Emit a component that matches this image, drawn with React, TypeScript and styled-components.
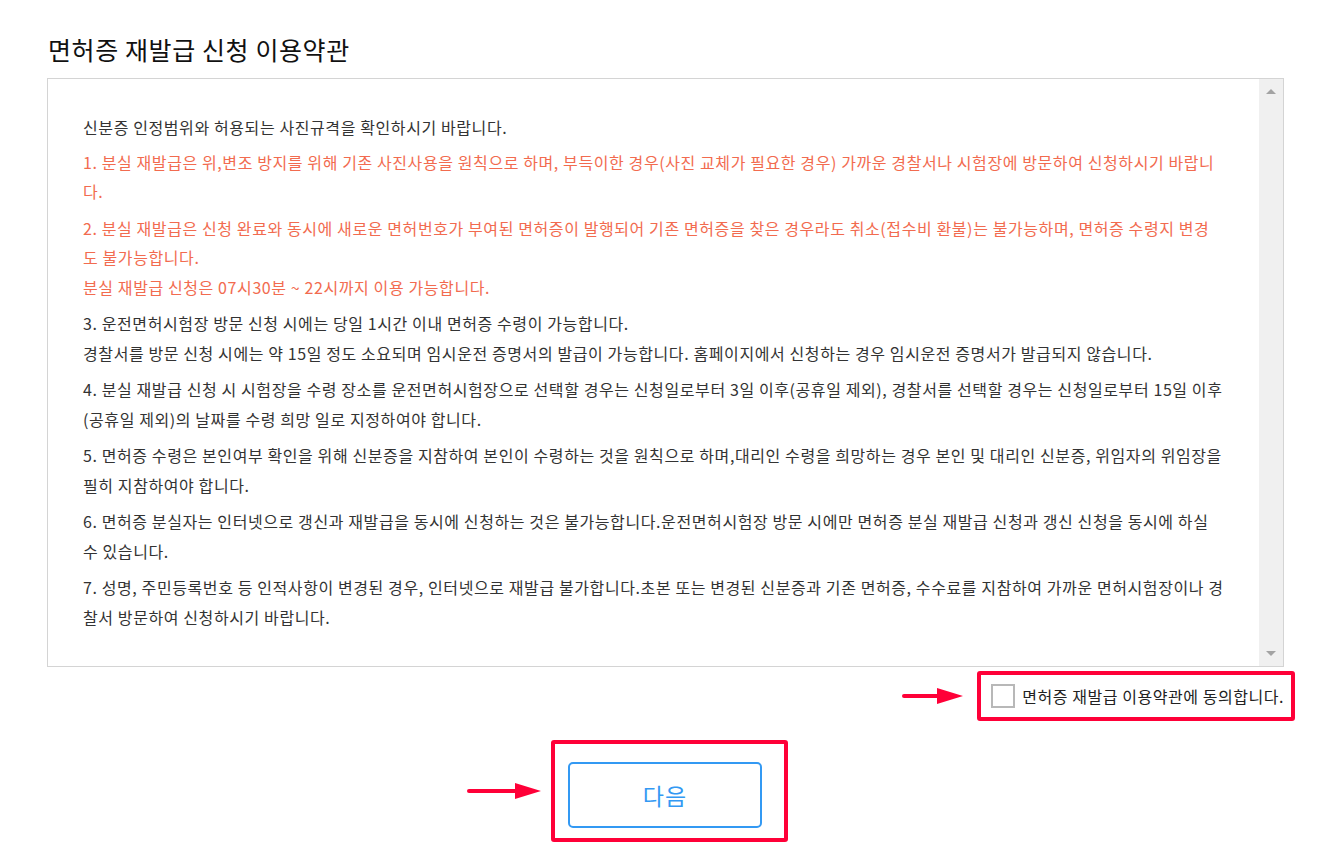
import React from "react";
import styled, { createGlobalStyle } from "styled-components";

const GlobalStyle = createGlobalStyle`
  html, body {
    margin: 0;
    padding: 0;
    background: #ffffff;
  }
  body {
    font-family: "Noto Sans CJK KR", "Noto Sans", sans-serif;
    color: #333333;
  }
`;

const Page = styled.div`
  width: 1237px;
  padding: 32px 0 0 47px;
`;

const Title = styled.h2`
  margin: 0 0 12px 1px;
  font-size: 25px;
  font-weight: 400;
  line-height: 34px;
  letter-spacing: 0.6px;
  color: #111111;
`;

const TermsBox = styled.div`
  display: flex;
  height: 587px;
  border: 1px solid #d4d4d4;
  background: #ffffff;
`;

const TermsBody = styled.div`
  flex: 1;
  padding: 34px 31px 0 35px;
  font-size: 16px;
  line-height: 29.5px;
  letter-spacing: 0.6px;
`;

const Para = styled.p<{ $warn?: boolean }>`
  margin: 0 0 7px;
  color: ${(p) => (p.$warn ? "#f26b4f" : "#333333")};

  &:first-child {
    margin-bottom: 5px;
  }
`;

const Scrollbar = styled.div`
  width: 24px;
  display: flex;
  flex-direction: column;
  justify-content: space-between;
  align-items: center;
  background: #f0f0f0;
  padding: 10px 0;
`;

const ArrowTri = styled.div<{ $down?: boolean }>`
  width: 0;
  height: 0;
  border-left: 5px solid transparent;
  border-right: 5px solid transparent;
  ${(p) =>
    p.$down
      ? "border-top: 5px solid #a3a3a3;"
      : "border-bottom: 5px solid #a3a3a3;"}
`;

const AgreeRow = styled.div`
  display: flex;
  justify-content: flex-end;
  align-items: center;
  margin: 4px -11px 0 0;
`;

const Highlight = styled.div`
  border: 4px solid #ff0038;
  border-radius: 3px;
`;

const AgreeBox = styled(Highlight)`
  display: flex;
  align-items: center;
  gap: 7px;
  height: 42px;
  padding: 0 7px 0 10px;
`;

const Check = styled.span`
  width: 20px;
  height: 20px;
  border: 2px solid #b8b8b8;
  background: #fff;
`;

const AgreeLabel = styled.span`
  font-size: 16px;
  color: #222222;
  letter-spacing: 0.55px;
`;

const Pointer = styled.svg`
  display: block;
  flex: none;
`;

const ButtonRow = styled.div`
  display: flex;
  justify-content: center;
  align-items: center;
  margin-top: 19px;
`;

const ButtonFrame = styled(Highlight)`
  padding: 18px 22px 10px 13px;
`;

const NextButton = styled.button`
  width: 194px;
  height: 66px;
  border: 2px solid #3399f3;
  border-radius: 5px;
  background: #ffffff;
  color: #3399f3;
  font-family: "Noto Sans CJK KR", "Noto Sans", sans-serif;
  font-size: 23px;
  letter-spacing: 1px;
  cursor: pointer;
`;

const Spacer = styled.div`
  width: 76px;
`;

function RedArrow({ width, gap }: { width: number; gap: number }) {
  return (
    <Pointer width={width + gap} height="20" viewBox={`0 0 ${width + gap} 20`}>
      <line x1="2" y1="10" x2={width - 16} y2="10" stroke="#ff0038" strokeWidth="4" strokeLinecap="round" />
      <polygon points={`${width - 26},2 ${width},10 ${width - 26},18`} fill="#ff0038" />
    </Pointer>
  );
}

export default function App() {
  return (
    <>
      <GlobalStyle />
      <Page>
        <Title>면허증 재발급 신청 이용약관</Title>
        <TermsBox>
          <TermsBody>
            <Para>신분증 인정범위와 허용되는 사진규격을 확인하시기 바랍니다.</Para>
            <Para $warn>
              1. 분실 재발급은 위,변조 방지를 위해 기존 사진사용을 원칙으로 하며, 부득이한 경우(사진 교체가 필요한 경우) 가까운 경찰서나 시험장에 방문하여 신청하시기 바랍니다.
            </Para>
            <Para $warn>
              2. 분실 재발급은 신청 완료와 동시에 새로운 면허번호가 부여된 면허증이 발행되어 기존 면허증을 찾은 경우라도 취소(접수비 환불)는 불가능하며, 면허증 수령지 변경
              <br />
              도 불가능합니다.
              <br />
              분실 재발급 신청은 07시30분 ~ 22시까지 이용 가능합니다.
            </Para>
            <Para>
              3. 운전면허시험장 방문 신청 시에는 당일 1시간 이내 면허증 수령이 가능합니다.
              <br />
              경찰서를 방문 신청 시에는 약 15일 정도 소요되며 임시운전 증명서의 발급이 가능합니다. 홈페이지에서 신청하는 경우 임시운전 증명서가 발급되지 않습니다.
            </Para>
            <Para>
              4. 분실 재발급 신청 시 시험장을 수령 장소를 운전면허시험장으로 선택할 경우는 신청일로부터 3일 이후(공휴일 제외), 경찰서를 선택할 경우는 신청일로부터 15일 이후(공휴일 제외)의 날짜를 수령 희망 일로 지정하여야 합니다.
            </Para>
            <Para>
              5. 면허증 수령은 본인여부 확인을 위해 신분증을 지참하여 본인이 수령하는 것을 원칙으로 하며,대리인 수령을 희망하는 경우 본인 및 대리인 신분증, 위임자의 위임장을 필히 지참하여야 합니다.
            </Para>
            <Para>
              6. 면허증 분실자는 인터넷으로 갱신과 재발급을 동시에 신청하는 것은 불가능합니다.운전면허시험장 방문 시에만 면허증 분실 재발급 신청과 갱신 신청을 동시에 하실 수 있습니다.
            </Para>
            <Para>
              7. 성명, 주민등록번호 등 인적사항이 변경된 경우, 인터넷으로 재발급 불가합니다.초본 또는 변경된 신분증과 기존 면허증, 수수료를 지참하여 가까운 면허시험장이나 경찰서 방문하여 신청하시기 바랍니다.
            </Para>
          </TermsBody>
          <Scrollbar>
            <ArrowTri />
            <ArrowTri $down />
          </Scrollbar>
        </TermsBox>
        <AgreeRow>
          <RedArrow width={61} gap={14} />
          <AgreeBox>
            <Check />
            <AgreeLabel>면허증 재발급 이용약관에 동의합니다.</AgreeLabel>
          </AgreeBox>
        </AgreeRow>
        <ButtonRow>
          <RedArrow width={74} gap={10} />
          <ButtonFrame>
            <NextButton>다음</NextButton>
          </ButtonFrame>
          <Spacer />
        </ButtonRow>
      </Page>
    </>
  );
}
